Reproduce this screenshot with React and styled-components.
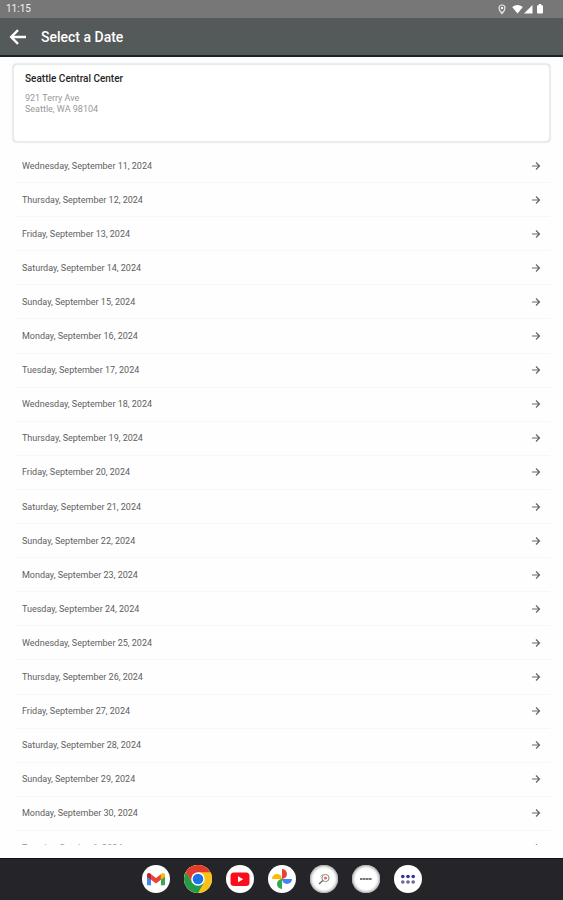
import React from "react";
import styled, { createGlobalStyle } from "styled-components";

const GlobalStyle = createGlobalStyle`
  * { box-sizing: border-box; }
  body {
    margin: 0;
    background: #fefefe;
    font-family: Roboto, "Liberation Sans", sans-serif;
  }
  button { font: inherit; border: 0; padding: 0; background: none; cursor: pointer; }
`;

const Screen = styled.div`
  display: flex;
  flex-direction: column;
  height: 100vh;
`;

const StatusBar = styled.div`
  display: flex;
  flex: none;
  align-items: center;
  justify-content: space-between;
  height: 18px;
  padding: 0 18px 0 6px;
  background: #777777;
  color: #f2f2f2;
  font-size: 10px;
  line-height: 18px;
`;

const StatusIcons = styled.svg`
  display: block;
  width: 48px;
  height: 12px;
`;

const AppBar = styled.header`
  display: flex;
  flex: none;
  align-items: center;
  gap: 14px;
  height: 39px;
  padding: 0 9px;
  background: #545959;
  border-bottom: 2px solid #182426;
  color: #ffffff;
`;

const BackButton = styled.button`
  display: flex;
  width: 18px;
  height: 18px;
  color: #ffffff;
`;

const Title = styled.h1`
  margin: 0;
  font-size: 14px;
  line-height: 18px;
  font-weight: 500;
`;

const Content = styled.main`
  display: flex;
  flex: 1;
  flex-direction: column;
  min-height: 0;
  padding: 7px 13px 13px;
`;

const LocationCard = styled.section`
  flex: none;
  height: 78px;
  padding: 8px 11px;
  border: 1px solid #eaeaea;
  border-radius: 4px;
  background: #ffffff;
  box-shadow: 0 0 2px rgba(0, 0, 0, 0.26);
`;

const LocationName = styled.h2`
  margin: 0 0 9px;
  color: #262626;
  font-size: 10px;
  line-height: 11px;
  font-weight: 500;
`;

const Address = styled.address`
  color: #999999;
  font-size: 9px;
  line-height: 11px;
  font-style: normal;
`;

const DateList = styled.ul`
  display: grid;
  flex: 1;
  grid-template-rows: repeat(20, minmax(34px, 1fr)) 14px;
  min-height: 0;
  margin: 7px 0 0;
  padding: 0 0 0 2px;
  overflow: hidden;
  list-style: none;
`;

const DateButton = styled.button`
  display: flex;
  flex: 1;
  align-items: center;
  justify-content: space-between;
  padding: 0 9px 0 7px;
  color: #606060;
  font-size: 9px;
  line-height: 12px;
  text-align: left;
`;

const DateItem = styled.li`
  display: flex;
  border-bottom: 1px solid #f7f7f7;

  &:last-child {
    height: 34px;
    border-bottom: 0;
  }

  &:last-child ${DateButton} {
    color: #999999;
  }
`;

const Dock = styled.nav`
  display: flex;
  flex: none;
  align-items: center;
  justify-content: center;
  gap: 14px;
  height: 42px;
  background: #252529;
  box-shadow: inset 0 1px #111113;
`;

const DockButton = styled.button`
  display: flex;
  width: 28px;
  height: 28px;
  border-radius: 50%;
  background: #ffffff;
  box-shadow: ${({ $ring }) => ($ring ? "inset 0 0 3px 1px #999999" : "none")};
`;

const dates = [
  "Wednesday, September 11, 2024",
  "Thursday, September 12, 2024",
  "Friday, September 13, 2024",
  "Saturday, September 14, 2024",
  "Sunday, September 15, 2024",
  "Monday, September 16, 2024",
  "Tuesday, September 17, 2024",
  "Wednesday, September 18, 2024",
  "Thursday, September 19, 2024",
  "Friday, September 20, 2024",
  "Saturday, September 21, 2024",
  "Sunday, September 22, 2024",
  "Monday, September 23, 2024",
  "Tuesday, September 24, 2024",
  "Wednesday, September 25, 2024",
  "Thursday, September 26, 2024",
  "Friday, September 27, 2024",
  "Saturday, September 28, 2024",
  "Sunday, September 29, 2024",
  "Monday, September 30, 2024",
  "Tuesday, October 1, 2024",
];

const RowArrow = () => (
  <svg width="10" height="10" viewBox="0 0 10 10" fill="none" stroke="#666666" strokeWidth="1.2" aria-hidden="true">
    <path d="M1 5h7.5M5 1.5L8.5 5L5 8.5" />
  </svg>
);

const GmailIcon = () => (
  <svg width="28" height="28" viewBox="0 0 28 28" aria-hidden="true">
    <path d="M5 9.5v10.7h4v-8z" fill="#4285f4" />
    <path d="M23 9.5v10.7h-4v-8z" fill="#34a853" />
    <path d="M18.9 9.3l1.3-1c1.2-.8 2.8 0 2.8 1.4v2l-4.1 3z" fill="#fbbc04" />
    <path d="M9.1 9.3l4.9 3.7l4.9-3.7v5.4L14 18.4l-4.9-3.7z" fill="#ea4335" />
    <path d="M5 11.7V9.7c0-1.4 1.6-2.2 2.8-1.4l1.3 1v5.4z" fill="#c5221f" />
  </svg>
);

const ChromeIcon = () => (
  <svg width="28" height="28" viewBox="0 0 28 28" aria-hidden="true">
    <circle cx="14" cy="14" r="14" fill="#fbc116" />
    <path d="M14 14L8.2 17.3L1.9 7A14 14 0 0 0 14 28L20 17.4z" fill="#229a4c" />
    <path d="M14 7.3H26.3A14 14 0 0 0 1.9 7L8.2 17.3L14 14z" fill="#e33b2e" />
    <circle cx="14" cy="14" r="6.8" fill="#ffffff" />
    <circle cx="14" cy="14" r="5.3" fill="#1a73e8" />
  </svg>
);

const YouTubeIcon = () => (
  <svg width="28" height="28" viewBox="0 0 28 28" aria-hidden="true">
    <rect x="4.5" y="7.5" width="19" height="13.5" rx="3.5" fill="#fb0d1b" />
    <path d="M12 11.2v6l5.2-3z" fill="#ffffff" />
  </svg>
);

const PhotosIcon = () => (
  <svg width="28" height="28" viewBox="0 0 28 28" aria-hidden="true">
    <path d="M14 4a5 5 0 0 1 0 10z" fill="#ea4335" />
    <path d="M24 14a5 5 0 0 1-10 0z" fill="#4285f4" />
    <path d="M14 24a5 5 0 0 1 0-10z" fill="#34a853" />
    <path d="M4 14a5 5 0 0 1 10 0z" fill="#fbbc04" />
  </svg>
);

const FinderIcon = () => (
  <svg width="28" height="28" viewBox="0 0 28 28" fill="none" aria-hidden="true">
    <circle cx="15.5" cy="13" r="3.6" stroke="#7f8a83" />
    <circle cx="15.5" cy="13" r="1.5" fill="#e56b55" />
    <path d="M12.8 15.6L9 19" stroke="#666666" strokeWidth="1.3" />
    <path d="M10.5 11.5l2-2" stroke="#aaaaaa" />
  </svg>
);

const BadgeIcon = () => (
  <svg width="28" height="28" viewBox="0 0 28 28" aria-hidden="true">
    <path d="M8 14h12" stroke="#777777" strokeWidth="2" strokeDasharray="2.6 .4" />
  </svg>
);

const AppsIcon = () => (
  <svg width="28" height="28" viewBox="0 0 28 28" aria-hidden="true">
    {[8.8, 14, 19.2].map((x) => (
      <React.Fragment key={x}>
        <circle cx={x} cy="11.5" r="1.8" fill="#343491" />
        <circle cx={x} cy="17" r="1.8" fill="#66668f" />
      </React.Fragment>
    ))}
  </svg>
);

const apps = [
  { name: "Gmail", Icon: GmailIcon },
  { name: "Chrome", Icon: ChromeIcon },
  { name: "YouTube", Icon: YouTubeIcon },
  { name: "Photos", Icon: PhotosIcon },
  { name: "Finder", Icon: FinderIcon, ring: true },
  { name: "Badge", Icon: BadgeIcon, ring: true },
  { name: "All apps", Icon: AppsIcon },
];

export default function App() {
  return (
    <>
      <GlobalStyle />
      <Screen>
        <StatusBar>
          <span>11:15</span>
          <StatusIcons viewBox="0 0 48 12" aria-hidden="true">
            <path d="M5 10.5C3 8.3 2 6.6 2 5a3 3 0 0 1 6 0c0 1.6-1 3.3-3 5.5z" fill="none" stroke="#e8e8e8" strokeWidth="1.2" />
            <circle cx="5" cy="5" r="1.2" fill="#f5f5f5" />
            <path d="M15.2 4Q20.5-.2 25.8 4L20.5 10.5z" fill="#ffffff" />
            <path d="M27 10.5h8.5V2z" fill="#ffffff" />
            <path d="M40 3.2q0-1 1-1h.8V1h2.4v1.2h.8q1 0 1 1v6.3q0 1-1 1h-4q-1 0-1-1z" fill="#ffffff" />
          </StatusIcons>
        </StatusBar>
        <AppBar>
          <BackButton aria-label="Back">
            <svg width="18" height="18" viewBox="0 0 18 18" fill="none" stroke="currentColor" strokeWidth="2.4" aria-hidden="true">
              <path d="M17 9H2.5M9 2.2L2.2 9L9 15.8" />
            </svg>
          </BackButton>
          <Title>Select a Date</Title>
        </AppBar>
        <Content>
          <LocationCard>
            <LocationName>Seattle Central Center</LocationName>
            <Address>
              921 Terry Ave
              <br />
              Seattle, WA 98104
            </Address>
          </LocationCard>
          <DateList>
            {dates.map((date) => (
              <DateItem key={date}>
                <DateButton>
                  <span>{date}</span>
                  <RowArrow />
                </DateButton>
              </DateItem>
            ))}
          </DateList>
        </Content>
        <Dock aria-label="Apps">
          {apps.map(({ name, Icon, ring }) => (
            <DockButton key={name} aria-label={name} $ring={ring}>
              <Icon />
            </DockButton>
          ))}
        </Dock>
      </Screen>
    </>
  );
}
